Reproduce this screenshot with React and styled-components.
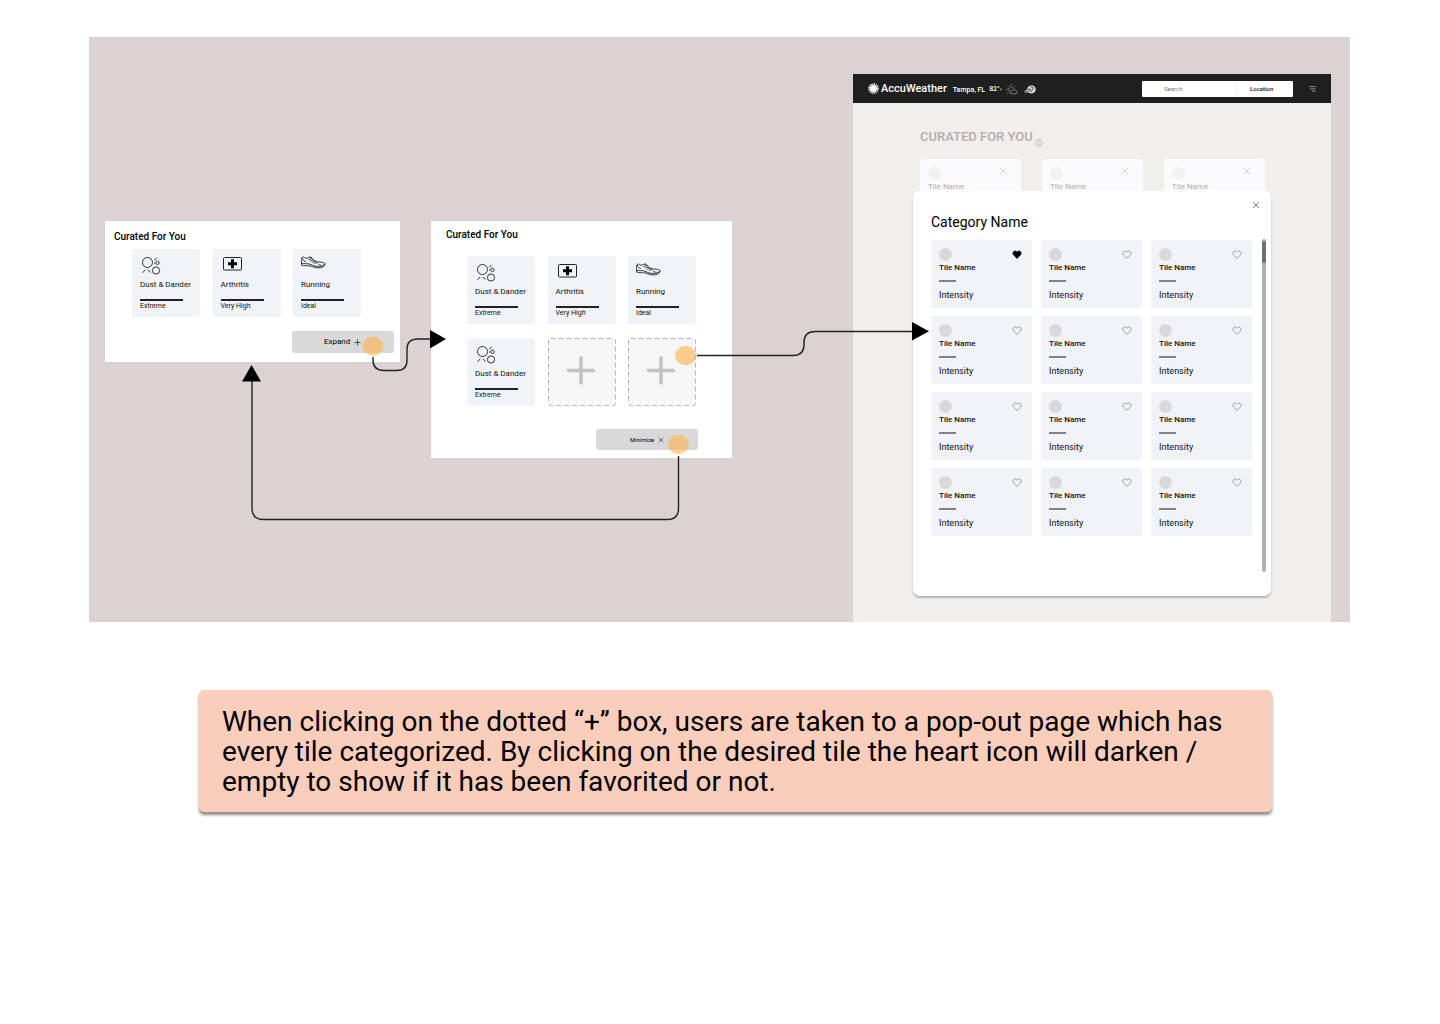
import React, { useState } from "react";
import styled, { createGlobalStyle } from "styled-components";

const GlobalStyle = createGlobalStyle`
  *, *::before, *::after { box-sizing: border-box; }
  body { margin: 0; background: #fff; color: #000; font-family: Roboto, "Liberation Sans", sans-serif; }
  h1, h2, h3, p { margin: 0; }
  button, input { font: inherit; color: inherit; border: 0; padding: 0; margin: 0; background: none; }
  button { cursor: pointer; }
  svg { display: block; flex: none; }
`;

const Main = styled.main`
  display: flex;
  flex-direction: column;
  gap: 68px;
  padding: 37px 90px 64px 89px;
`;

/* ---------- diagram canvas ---------- */

const Canvas = styled.section`
  position: relative;
  min-width: 1261px;
  height: 585px;
  background: #dbd2d3;
`;

const Node = styled.div`
  position: absolute;
  left: ${(p) => p.$x}px;
  top: ${(p) => p.$y}px;
  width: ${(p) => p.$w}px;
`;

const Connectors = styled.svg`
  position: absolute;
  left: 0;
  top: 0;
  pointer-events: none;
`;

/* ---------- curated panels ---------- */

const Panel = styled.section`
  display: flex;
  flex-direction: column;
  height: ${(p) => p.$height}px;
  padding: ${(p) => p.$pad};
  background: #fff;
`;

const PanelTitle = styled.h2`
  font-size: 10px;
  line-height: 12px;
  font-weight: 500;
`;

const TileGrid = styled.div`
  display: grid;
  grid-template-columns: repeat(3, 68px);
  justify-content: space-between;
  row-gap: 14px;
  width: 229px;
  margin: ${(p) => p.$margin};
`;

const ConditionTile = styled.article`
  height: 68px;
  padding: 6px 7px 0 8px;
  border-radius: 3px;
  background: #f0f3f8;
  color: #111;
`;

const ConditionName = styled.h3`
  margin-top: 3px;
  font-size: 8px;
  line-height: 10px;
  font-weight: 400;
  white-space: nowrap;
`;

const ConditionBar = styled.div`
  width: 43px;
  height: 2px;
  margin: 9px 0 1px;
  background: #222;
`;

const ConditionLevel = styled.p`
  font-size: 7px;
  line-height: 8px;
`;

const AddTile = styled.button`
  height: 68px;
`;

const PanelButton = styled.button`
  display: flex;
  align-items: center;
  align-self: flex-end;
  gap: 4px;
  width: 102px;
  height: 22px;
  padding-left: ${(p) => (p.$small ? 34 : 32)}px;
  border-radius: 3px;
  background: #d9d9d9;
  font-size: ${(p) => (p.$small ? 6 : 8)}px;
  line-height: 10px;
`;

/* ---------- site page ---------- */

const Page = styled.div`
  position: relative;
  height: 548px;
  background: #f0efed;
`;

const TopBar = styled.header`
  display: flex;
  align-items: center;
  height: 29px;
  padding: 0 15px;
  background: #1f1f1f;
  color: #fff;
`;

const Brand = styled.a`
  display: flex;
  align-items: center;
  gap: 2px;
  color: #fff;
  font-size: 11px;
  line-height: 12px;
  font-weight: 500;
  text-decoration: none;
`;

const Weather = styled.p`
  display: flex;
  align-items: center;
  gap: 4px;
  margin: 2px 0 0 6px;
  font-size: 7px;
  line-height: 10px;
  font-weight: 500;
  white-space: nowrap;
`;

const Unit = styled.span`
  font-size: 4px;
  color: #aaa;
`;

const SearchBox = styled.form`
  display: flex;
  align-items: center;
  width: 151px;
  height: 16px;
  margin-left: auto;
  border-radius: 1px;
  background: #fff;
  font-size: 6px;
  line-height: 10px;
`;

const SearchInput = styled.input`
  width: 95px;
  height: 10px;
  padding-left: 22px;
  border-right: 1px solid #eee;
  &::placeholder { color: #777; opacity: 1; }
`;

const LocationButton = styled.button`
  margin-left: 13px;
  color: #111;
  font-weight: 500;
`;

const MenuButton = styled.button`
  margin-left: 16px;
`;

const PageHeading = styled.div`
  display: flex;
  align-items: flex-end;
  gap: 2px;
  margin: 24px 0 12px 67px;
  color: #b9abab;
`;

const PageTitle = styled.h1`
  font-size: 13px;
  line-height: 20px;
  font-weight: 500;
`;

const BackTiles = styled.div`
  display: grid;
  grid-template-columns: repeat(3, 101px);
  justify-content: space-between;
  margin: 0 66px 0 67px;
`;

const BackTile = styled.article`
  height: 68px;
  padding: 8px;
  border-radius: 3px;
  background: #fbfafc;
  color: #b9abab;
`;

/* ---------- category dialog ---------- */

const Dialog = styled.section`
  position: absolute;
  left: 60px;
  right: 60px;
  top: 117px;
  height: 405px;
  padding: 10px 5px 0 18px;
  border-radius: 7px;
  background: #fff;
  box-shadow: 0 2px 2px rgba(0, 0, 0, 0.25);
`;

const CloseButton = styled.button`
  display: block;
  margin: 0 6px 0 auto;
`;

const DialogTitle = styled.h2`
  margin: 3px 0 7px;
  font-size: 14px;
  line-height: 20px;
  font-weight: 400;
`;

const DialogBody = styled.div`
  display: flex;
  justify-content: space-between;
`;

const CategoryGrid = styled.div`
  display: grid;
  grid-template-columns: repeat(3, 101px);
  align-content: start;
  gap: 8px 9px;
  padding-top: 1px;
`;

const CategoryTile = styled.article`
  height: 68px;
  padding: 8px;
  border-radius: 3px;
  background: #f0f3f8;
  color: #111;
`;

const TileTop = styled.div`
  display: flex;
  justify-content: space-between;
  padding-right: ${(p) => p.$inset}px;
`;

const Avatar = styled.div`
  width: 13px;
  height: 13px;
  border-radius: 50%;
  background: ${(p) => (p.$faded ? "#f3f1f2" : "#d9d9d9")};
`;

const TileName = styled.h3`
  margin-top: 2px;
  font-size: 8px;
  line-height: 10px;
  font-weight: ${(p) => (p.$faded ? 400 : 500)};
`;

const TileBar = styled.div`
  width: 17px;
  height: 2px;
  margin: 7px 0 8px;
  background: #808285;
`;

const Intensity = styled.p`
  font-size: 9px;
  line-height: 10px;
`;

const Track = styled.div`
  width: 4px;
  height: 333px;
  padding-top: 2px;
  border-radius: 2px;
  background: #b1b1b1;
`;

const Thumb = styled.div`
  height: 22px;
  border-radius: 2px;
  background: #707070;
`;

/* ---------- caption ---------- */

const Caption = styled.p`
  margin: 0 78px 0 110px;
  padding: 17px 23px 15px;
  border-radius: 5px;
  background: #fbcdbb;
  box-shadow: 0 3px 3px rgba(0, 0, 0, 0.45);
  font-size: 28px;
  line-height: 30px;
`;

/* ---------- icons ---------- */

const DustIcon = () => (
  <svg width="24" height="22" viewBox="0 0 24 22" fill="none" stroke="#333" strokeWidth="1">
    <circle cx="7.5" cy="7.500" r="5" />
    <circle cx="16" cy="15.500" r="3.600" />
    <circle cx="17.500" cy="7.800" r="1.700" />
    <path d="M14.300 5.500l2.300-2.700M2.500 17.800l2.800-3M8 14.800l2.400 2.800M14 8.300l1.300-.5" />
  </svg>
);

const FirstAidIcon = () => (
  <svg width="24" height="22" viewBox="0 0 24 22">
    <rect x="2.500" y="2.500" width="18" height="12.500" rx="1" fill="none" stroke="#222" />
    <path d="M10 4.300h3v3h3v3h-3v3h-3v-3H7v-3h3z" fill="#000" />
  </svg>
);

const ShoeIcon = () => (
  <svg width="26" height="22" viewBox="0 0 26 22" fill="none" stroke="#222" strokeWidth="0.900" strokeLinejoin="round" strokeLinecap="round">
    <path d="M.5 3.200L2.300 1.800c1.500 1.700 4.200 1.700 5.600.4L10 2c1.500 3 4 4.600 7.400 5 4.300.2 6.700.6 6.700 1.900-.6 2.800-3.200 4.200-7.300 4-4.300-.1-5.800-2.100-9.300-2.200-2.400 0-4.700.3-7-.7L.5 8z" />
    <path d="M.6 8.200c2.800 1 5.700 0 8.300 1 3.200 1.500 5.600 2.600 9.500 2.200 2.600-.2 4.500-1 5.500-2M7.700 4.500l2.800-1M9.500 6l2.600-1.100M11.500 7.300l2.400-1M13.600 8.500l2-1M1.500 3.500C2 5 2.300 6 4.500 6.500M17 8.800c.8 1 2 1.500 3.300 1.500" />
  </svg>
);

const AddTileIcon = () => (
  <svg width="68" height="68" viewBox="0 0 68 68">
    <rect x="0.500" y="0.500" width="67" height="67" rx="2" fill="#f6f6f6" stroke="#b5b5b5" strokeDasharray="5 3" />
    <path d="M33 20v25M20.500 32.500h25" stroke="#c2c2c2" strokeWidth="3.500" strokeLinecap="round" />
  </svg>
);

const CrossIcon = ({ size = 8, color = "#777" }) => (
  <svg width={size} height={size} viewBox="0 0 8 8" stroke={color} strokeWidth="0.900">
    <path d="M1 1l6 6M7 1L1 7" />
  </svg>
);

const PlusIcon = () => (
  <svg width="7" height="7" viewBox="0 0 7 7" stroke="#333" strokeWidth="0.800">
    <path d="M3.500 .5v6M.5 3.500h6" />
  </svg>
);

const HeartIcon = ({ filled }) => (
  <svg width="10" height="13" viewBox="0 0 10 13">
    <path
      d="M5 10.400L1.700 7.100C.6 6 .7 4.300 1.800 3.500c1-.8 2.500-.5 3.200.7.7-1.200 2.200-1.500 3.200-.7 1.100.8 1.200 2.500.1 3.600z"
      fill={filled ? "#000" : "none"}
      stroke={filled ? "#000" : "#8a8a8e"}
      strokeWidth="0.800"
      strokeLinejoin="round"
    />
  </svg>
);

const SunLogo = () => (
  <svg width="11" height="11" viewBox="0 0 12 12">
    <circle cx="6" cy="6" r="3.800" fill="#fff" />
    <circle cx="6" cy="6" r="4.900" fill="none" stroke="#fff" strokeWidth="1.700" strokeDasharray="1.250 .67" />
  </svg>
);

const PartlyCloudyIcon = () => (
  <svg width="12" height="11" viewBox="0 0 12 11" fill="none" stroke="#aaa" strokeWidth="0.700">
    <path d="M5 9.800h4.800c1.700-.2 1.700-2.400.1-2.600C9.300 5 6.700 5.200 6.200 7 4 6.700 3.300 9.300 5 9.800zM3.300 7.300C2 5.300 3.500 3 5.500 3.200c1 .1 1.700.7 2 1.500M5.300 0v1.700M1.500 1.500l1.200 1.200M0 5.300h1.700M1.300 9.200l1.300-1M9.300 1.600L8.200 2.700" />
  </svg>
);

const StormIcon = () => (
  <svg width="12" height="11" viewBox="0 0 12 11">
    <path d="M0 8.200L2.800 5.500C3.200 2.500 6 .9 8.600 1.500c3 .7 4 4 2.300 6.300-1.500 2-4.400 2.200-6.200.8z" fill="#ddd" />
    <path d="M3.300 5.300h3.500L4.700 7.700M6.500 3.200c2-.7 3.300.3 2.500 2L6.700 8.300M2 7.300h2" stroke="#222" strokeWidth="0.800" fill="none" />
  </svg>
);

const MenuIcon = () => (
  <svg width="7" height="6" viewBox="0 0 7 6" stroke="#999" strokeWidth="0.900">
    <path d="M0 .6h6.500M1 2.800h5.500M3 5h3.500" />
  </svg>
);

const InfoIcon = () => (
  <svg width="8" height="8" viewBox="0 0 8 8" fill="none" stroke="#b9abab" strokeWidth="0.800">
    <circle cx="4" cy="4" r="3.300" />
    <path d="M4 3.400v2.400M4 1.900v.8" />
  </svg>
);

/* ---------- content ---------- */

const CONDITIONS = {
  dust: { name: "Dust & Dander", level: "Extreme", Icon: DustIcon },
  arthritis: { name: "Arthritis", level: "Very High", Icon: FirstAidIcon },
  running: { name: "Running", level: "Ideal", Icon: ShoeIcon },
};

function Condition({ id }) {
  const { name, level, Icon } = CONDITIONS[id];
  return (
    <ConditionTile>
      <Icon />
      <ConditionName>{name}</ConditionName>
      <ConditionBar />
      <ConditionLevel>{level}</ConditionLevel>
    </ConditionTile>
  );
}

function CategoryCard({ defaultFavorite }) {
  const [favorite, setFavorite] = useState(defaultFavorite);
  return (
    <CategoryTile>
      <TileTop $inset={2}>
        <Avatar />
        <button type="button" aria-label="Favorite" aria-pressed={favorite} onClick={() => setFavorite(!favorite)}>
          <HeartIcon filled={favorite} />
        </button>
      </TileTop>
      <TileName>Tile Name</TileName>
      <TileBar />
      <Intensity>Intensity</Intensity>
    </CategoryTile>
  );
}

export default function App() {
  return (
    <>
      <GlobalStyle />
      <Main>
        <Canvas>
          <Node $x={16} $y={184} $w={295}>
            <Panel $height={141} $pad="10px 6px 9px 9px">
              <PanelTitle>Curated For You</PanelTitle>
              <TileGrid $margin="6px 0 14px 18px">
                <Condition id="dust" />
                <Condition id="arthritis" />
                <Condition id="running" />
              </TileGrid>
              <PanelButton type="button">
                Expand <PlusIcon />
              </PanelButton>
            </Panel>
          </Node>

          <Node $x={342} $y={184} $w={301}>
            <Panel $height={237} $pad="8px 34px 8px 15px">
              <PanelTitle>Curated For You</PanelTitle>
              <TileGrid $margin="15px 0 23px 21px">
                <Condition id="dust" />
                <Condition id="arthritis" />
                <Condition id="running" />
                <Condition id="dust" />
                <AddTile type="button" aria-label="Add tile"><AddTileIcon /></AddTile>
                <AddTile type="button" aria-label="Add tile"><AddTileIcon /></AddTile>
              </TileGrid>
              <PanelButton type="button" $small>
                Minimize <CrossIcon size={6} color="#333" />
              </PanelButton>
            </Panel>
          </Node>

          <Node $x={764} $y={37} $w={478}>
            <Page>
              <TopBar>
                <Brand href="#home"><SunLogo />AccuWeather</Brand>
                <Weather>
                  <span>Tampa, FL</span>
                  <span>82°<Unit>F</Unit></span>
                  <PartlyCloudyIcon />
                </Weather>
                <Weather><StormIcon /></Weather>
                <SearchBox>
                  <SearchInput type="text" placeholder="Search" aria-label="Search" />
                  <LocationButton type="button">Location</LocationButton>
                </SearchBox>
                <MenuButton type="button" aria-label="Menu"><MenuIcon /></MenuButton>
              </TopBar>
              <PageHeading>
                <PageTitle>CURATED FOR YOU</PageTitle>
                <InfoIcon />
              </PageHeading>
              <BackTiles>
                {[0, 1, 2].map((i) => (
                  <BackTile key={i}>
                    <TileTop $inset={6}>
                      <Avatar $faded />
                      <CrossIcon color="#cfcaca" />
                    </TileTop>
                    <TileName $faded>Tile Name</TileName>
                  </BackTile>
                ))}
              </BackTiles>
              <Dialog aria-label="Category Name">
                <CloseButton type="button" aria-label="Close"><CrossIcon /></CloseButton>
                <DialogTitle>Category Name</DialogTitle>
                <DialogBody>
                  <CategoryGrid>
                    {Array.from({ length: 12 }, (_, i) => (
                      <CategoryCard key={i} defaultFavorite={i === 0} />
                    ))}
                  </CategoryGrid>
                  <Track><Thumb /></Track>
                </DialogBody>
              </Dialog>
            </Page>
          </Node>

          <Connectors width="1261" height="585" viewBox="89 37 1261 585" aria-hidden="true">
            <g fill="#ffb04c" fillOpacity="0.600">
              <ellipse cx="373" cy="346" rx="10.500" ry="9.700" />
              <ellipse cx="685.500" cy="355.500" rx="10.500" ry="9.700" />
              <ellipse cx="678.500" cy="444.500" rx="10.500" ry="9.700" />
            </g>
            <g fill="none" stroke="#222" strokeWidth="1.400">
              <path d="M373 357v3q0 10.500 11 10.500h13q10 0 10-10.500v-11q0-10 11-10h13" />
              <path d="M697 355.500h96q11 0 11-11v-2q0-11 11-11h99" />
              <path d="M678.500 456v52q0 11.500-11 11.500h-404q-11.500 0-11.500-11.500V380" />
            </g>
            <path d="M430 330l16 9-16 9.500zM912 322l17 9.200-17 9.300zM242 381.500l9.500-16.500 9.500 16.500z" fill="#000" />
          </Connectors>
        </Canvas>

        <Caption>
          When clicking on the dotted “+” box, users are taken to a pop-out page which has every tile
          categorized. By clicking on the desired tile the heart icon will darken / empty to show if it has
          been favorited or not.
        </Caption>
      </Main>
    </>
  );
}
